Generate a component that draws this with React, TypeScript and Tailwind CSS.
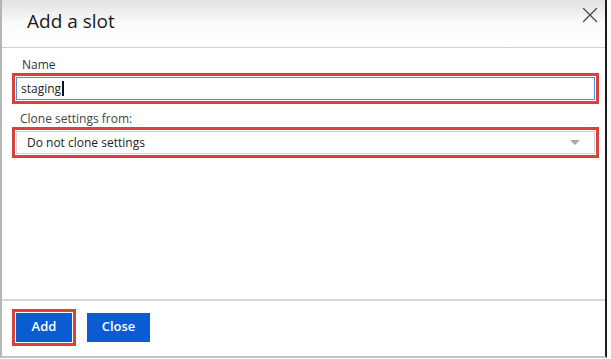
import { X } from 'lucide-react'

export default function App() {
  return (
    <div className="w-[611px] h-[359px] bg-white flex" style={{ fontFamily: '"Open Sans", "Noto Sans", sans-serif' }}>
      <div className="w-[607px] h-[358px] flex flex-col border-l-2 border-l-[#b5b5b5] border-r-2 border-r-[#1c1c1c] border-b-2 border-b-[#c4c4c4]">
        {/* Header */}
        <div className="h-[48px] shrink-0 flex items-start justify-between bg-gradient-to-b from-[#e2e2e2] via-[#fbfbfb] to-white border-b border-[#cfcfcf]">
          <h1 className="pl-[25px] pt-[8px] text-[19px] leading-[26px] text-[#1a1a1a]">Add a slot</h1>
          <button className="mt-[2px] mr-[2px] w-[26px] h-[26px] flex items-center justify-center text-[#444]">
            <X size={26} strokeWidth={1.1} />
          </button>
        </div>

        {/* Body */}
        <div className="flex-1 px-[10px] pt-[10px] flex flex-col">
          <label className="pl-[10px] text-[12px] leading-[14px] text-[#333]">Name</label>
          <div className="mt-[1px] w-[587px] border-[3px] border-[#d8423c] p-[1px]">
            <div className="h-[23px] border border-[#4d8fdc] bg-white flex items-center pl-[4px] text-[12px] text-[#222]">
              staging
              <span className="ml-[1px] w-[2px] h-[15px] bg-[#111]" />
            </div>
          </div>
          <label className="mt-[8px] pl-[8px] text-[12px] leading-[14px] text-[#444]">Clone settings from:</label>
          <div className="mt-[1px] w-[587px] border-[3px] border-[#d8423c] p-[1px]">
            <div className="h-[23px] border border-[#d2d2d2] bg-white flex items-center justify-between pl-[10px] pr-[14px] text-[12px] text-[#222]">
              <span>Do not clone settings</span>
              <span className="w-0 h-0 border-l-[5px] border-r-[5px] border-t-[5px] border-l-transparent border-r-transparent border-t-[#a8a8a8]" />
            </div>
          </div>
        </div>

        {/* Footer */}
        <div className="h-[57px] shrink-0 border-t-2 border-[#d6d6d6] flex items-center gap-[11px] pl-[10px] pb-[3px]">
          <div className="border-[3px] border-[#d8423c] p-[1px]">
            <button className="w-[56px] h-[29px] bg-[#0b5bd3] text-white text-[13px] font-semibold">Add</button>
          </div>
          <button className="w-[63px] h-[29px] bg-[#0b5bd3] text-white text-[13px] font-semibold">Close</button>
        </div>
      </div>
    </div>
  )
}
